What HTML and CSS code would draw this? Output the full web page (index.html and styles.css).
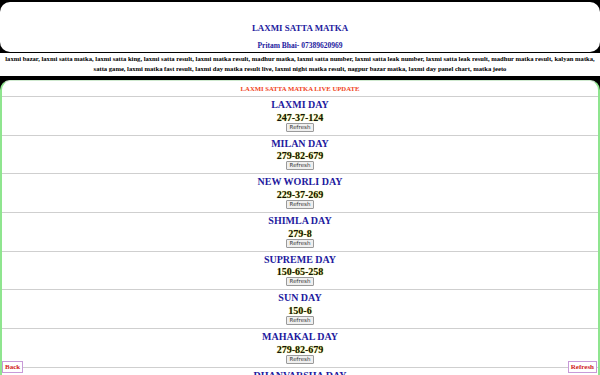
FILE: index.html
```html
<!DOCTYPE html>
<html lang="en">
<head>
    <meta charset="UTF-8">
    <meta name="viewport" content="width=device-width, initial-scale=1.0">
    <title>Laxmi Satta Matka</title>
    <link rel="stylesheet" href="styles.css">
</head>
<body>

<!-- Site header -->
<div class="header">
    <h1>LAXMI SATTA MATKA</h1>
    <p class="contact">Pritam Bhai- 07389620969</p>
</div>

<!-- Keyword strip -->
<p class="keywords">laxmi bazar, laxmi satta matka, laxmi satta king, laxmi satta result, laxmi matka result, madhur matka, laxmi satta number, laxmi satta leak number, laxmi satta leak result, madhur matka result, kalyan matka, satta game, laxmi matka fast result, laxmi day matka result live, laxmi night matka result, nagpur bazar matka, laxmi day panel chart, matka jeeto</p>

<!-- Live results -->
<div class="live">
    <div class="live-title">LAXMI SATTA MATKA LIVE UPDATE</div>

    <div class="result">
        <h2>LAXMI DAY</h2>
        <div class="number">247-37-124</div>
        <button class="refresh">Refresh</button>
    </div>
    <div class="result">
        <h2>MILAN DAY</h2>
        <div class="number">279-82-679</div>
        <button class="refresh">Refresh</button>
    </div>
    <div class="result">
        <h2>NEW WORLI DAY</h2>
        <div class="number">229-37-269</div>
        <button class="refresh">Refresh</button>
    </div>
    <div class="result">
        <h2>SHIMLA DAY</h2>
        <div class="number">279-8</div>
        <button class="refresh">Refresh</button>
    </div>
    <div class="result">
        <h2>SUPREME DAY</h2>
        <div class="number">150-65-258</div>
        <button class="refresh">Refresh</button>
    </div>
    <div class="result">
        <h2>SUN DAY</h2>
        <div class="number">150-6</div>
        <button class="refresh">Refresh</button>
    </div>
    <div class="result">
        <h2>MAHAKAL DAY</h2>
        <div class="number">279-82-679</div>
        <button class="refresh">Refresh</button>
    </div>
    <div class="result">
        <h2>DHANVARSHA DAY</h2>
        <div class="number">136-04-455</div>
        <button class="refresh">Refresh</button>
    </div>
</div>

<!-- Fixed bottom buttons -->
<a class="float-btn back" href="#">Back</a>
<a class="float-btn reload" href="#">Refresh</a>

</body>
</html>
```

FILE: styles.css
```css
body {
    margin: 0;
    background-color: #000;
    font-family: "Liberation Serif", "Times New Roman", serif;
    font-weight: bold;
}
.header {
    background-color: #fff;
    border-radius: 10px;
    margin-top: 2px;
    height: 50px;
    box-sizing: border-box;
    padding-top: 20px;
    text-align: center;
}
.header h1 {
    margin: 0;
    font-size: 8.9px;
    line-height: 12px;
    color: #231a9e;
}
.contact {
    margin: 7px 0 0;
    font-size: 7.5px;
    line-height: 10px;
    color: #231a9e;
}
.keywords {
    margin: 1px 0 0;
    height: 23px;
    box-sizing: border-box;
    padding: 1px 2px 0;
    background-color: #fff;
    font-size: 6.6px;
    line-height: 10px;
    text-align: center;
    color: #000;
}
.live {
    margin-top: 4px;
    background-color: #fff;
    border: 2px solid #8fe58f;
    border-top: 1px solid #cfe9cf;
    border-bottom: none;
    border-radius: 10px 10px 0 0;
    text-align: center;
}
.live-title {
    height: 15px;
    line-height: 15px;
    font-size: 6.7px;
    color: #f0441c;
    border-bottom: 1px solid #cfcfcf;
}
.result {
    height: 38.7px;
    box-sizing: border-box;
    padding-top: 2px;
    border-bottom: 1px solid #cfcfcf;
}
.result h2 {
    margin: 0;
    font-size: 10px;
    line-height: 12.5px;
    color: #231a9e;
}
.number {
    font-size: 10px;
    line-height: 11px;
    color: #111;
    text-shadow: 0 0 1px #d8d800;
}
.refresh {
    display: block;
    margin: 0 auto;
    height: 9px;
    padding: 0 3px;
    font-family: "DejaVu Sans", sans-serif;
    font-weight: normal;
    font-size: 5.5px;
    line-height: 7px;
    color: #333;
    background-color: #efefef;
    border: 1px solid #9a9a9a;
    border-radius: 1px;
}
.float-btn {
    position: fixed;
    bottom: 2px;
    height: 12px;
    box-sizing: border-box;
    padding: 0 2px;
    font-size: 7px;
    line-height: 10px;
    color: #d01c1c;
    text-decoration: none;
    background-color: #fff;
    border: 1px solid #c89ad8;
}
.back {
    left: 2px;
}
.reload {
    right: 3px;
}
```
